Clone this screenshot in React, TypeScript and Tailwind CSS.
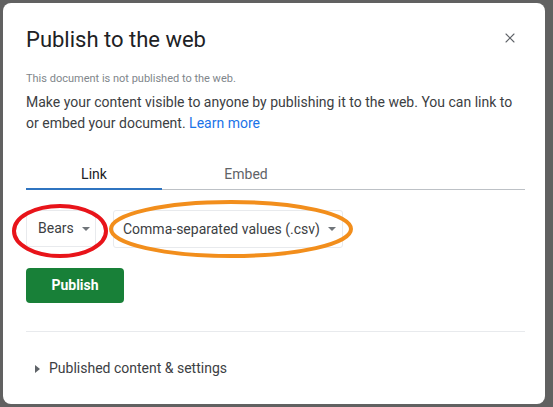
import { X } from "lucide-react";

function Caret() {
  return (
    <svg width="8" height="4" viewBox="0 0 8 4" className="ml-[8px] shrink-0 fill-[#70757a]">
      <path d="M0 0h8L4 4z" />
    </svg>
  );
}

export default function App() {
  return (
    <div className="h-[407px] w-[553px] bg-[#616161] pb-[3px] pl-[3px] pr-[8px] pt-[3px] font-['Roboto','Liberation_Sans',sans-serif]">
      <div className="relative h-full rounded-[8px] bg-white pl-[23px] pr-[20px]">
        <header className="flex items-start justify-between pt-[23px]">
          <h1 className="text-[22px] leading-[28px] text-[#202124]">Publish to the web</h1>
          <button className="mr-[7px] mt-[4px] text-[#5f6368]">
            <X size={16} strokeWidth={1.6} />
          </button>
        </header>

        <p className="mt-[18px] text-[11px] leading-[14px] text-[#80868b]">
          This document is not published to the web.
        </p>
        <p className="mt-[6px] text-[14px] leading-[21px] text-[#3c4043]">
          Make your content visible to anyone by publishing it to the web. You can link to or
          embed your document. <span className="text-[#1a73e8]">Learn more</span>
        </p>

        <div role="tablist" className="mt-[30px] flex border-b border-[#bdc1c6] text-[14px] leading-[20px]">
          <button className="-mb-px w-[136px] border-b-2 border-[#2f74c0] pb-[4px] text-[#202124]">
            Link
          </button>
          <button className="-mb-px w-[168px] border-b-2 border-transparent pb-[4px] text-[#5f6368]">
            Embed
          </button>
        </div>

        <div className="mt-[20px] flex gap-[17px] whitespace-nowrap text-[14px] text-[#3c4043]">
          <div className="flex h-[37px] w-[70px] items-center rounded-[3px] border border-[#e8eaed] pl-[11px]">
            Bears
            <Caret />
          </div>
          <div className="flex h-[38px] w-[230px] items-center rounded-[3px] border border-[#e8eaed] pl-[9px]">
            Comma-separated values (.csv)
            <Caret />
          </div>
        </div>

        <button className="mt-[20px] h-[35px] w-[98px] rounded-[4px] bg-[#188038] text-[14px] font-bold text-white">
          Publish
        </button>

        <hr className="mt-[28px] border-[#e8eaed]" />

        <div className="mt-[26px] flex items-center gap-[9px] pl-[9px] text-[14px] text-[#3c4043]">
          <svg width="5" height="8" viewBox="0 0 5 8" className="fill-[#5f6368]">
            <path d="M0 0l5 4-5 4z" />
          </svg>
          Published content &amp; settings
        </div>

        <svg
          className="pointer-events-none absolute left-0 top-0"
          width="545"
          height="401"
          viewBox="0 0 545 401"
        >
          <ellipse cx="57" cy="228" rx="46" ry="25" fill="none" stroke="#e8141a" strokeWidth="4" />
          <ellipse cx="228" cy="226" rx="120" ry="27" fill="none" stroke="#f28e1c" strokeWidth="4" />
        </svg>
      </div>
    </div>
  );
}
